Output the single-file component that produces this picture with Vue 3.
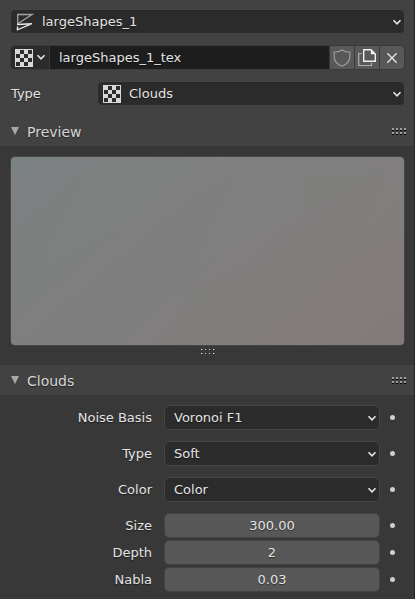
<script setup>
import { ref } from 'vue'

const material = ref('largeShapes_1')
const textureName = ref('largeShapes_1_tex')
const textureType = ref('Clouds')
const previewOpen = ref(true)
const cloudsOpen = ref(true)

const choices = ref([
  { id: 'noise-basis', label: 'Noise Basis', value: 'Voronoi F1', options: ['Blender Original', 'Original Perlin', 'Improved Perlin', 'Voronoi F1', 'Voronoi F2'] },
  { id: 'noise-type', label: 'Type', value: 'Soft', options: ['Soft', 'Hard'] },
  { id: 'noise-color', label: 'Color', value: 'Color', options: ['Grayscale', 'Color'] },
])

const numbers = ref([
  { id: 'size', label: 'Size', value: '300.00' },
  { id: 'depth', label: 'Depth', value: '2' },
  { id: 'nabla', label: 'Nabla', value: '0.03' },
])
</script>

<template>
  <main class="editor">
    <svg class="defs" aria-hidden="true">
      <symbol id="checker" viewBox="0 0 18 18">
        <rect width="18" height="18" fill="#d8d8d8" />
        <path
          fill="#2b2b2b"
          d="M5 1h4v4h-4zM13 1h4v4h-4zM1 5h4v4h-4zM9 5h4v4h-4zM5 9h4v4h-4zM13 9h4v4h-4zM1 13h4v4h-4zM9 13h4v4h-4z"
        />
      </symbol>
      <symbol id="chevron" viewBox="0 0 10 7">
        <path d="M1.5 1.3 5 4.8 8.5 1.3" fill="none" stroke="#e6e6e6" stroke-width="1.6" />
      </symbol>
    </svg>

    <section class="context">
      <div class="drop">
        <select v-model="material" class="with-icon" aria-label="Texture user">
          <option>largeShapes_1</option>
        </select>
        <svg class="lead" width="18" height="18" viewBox="0 0 18 18" fill="none" aria-hidden="true">
          <path d="M1.7 11V1.5H16L1.7 10.8" stroke="#a2a2a2" stroke-width="1.3" />
          <path d="M1 11.5 16 10.7 1.5 16.8V13.5" stroke="#e8e8e8" stroke-width="1.4" />
        </svg>
        <svg class="arrow" width="10" height="7" aria-hidden="true"><use href="#chevron" /></svg>
      </div>

      <div class="datablock">
        <button type="button" class="browse" aria-label="Browse textures">
          <svg width="18" height="18" aria-hidden="true"><use href="#checker" /></svg>
          <svg width="10" height="7" aria-hidden="true"><use href="#chevron" /></svg>
        </button>
        <input v-model="textureName" type="text" aria-label="Texture name" />
        <button type="button" class="action" aria-label="Fake user">
          <svg width="18" height="18" viewBox="0 0 18 18" fill="none" aria-hidden="true">
            <path d="M9 .9C7 2.4 4.5 3 1.2 3V7.5C1.2 12 4 15.2 9 17.2C14 15.2 16.8 12 16.8 7.5V3C13.5 3 11 2.4 9 .9Z" stroke="#9c9c9c" stroke-width="1.2" />
          </svg>
        </button>
        <button type="button" class="action" aria-label="New texture">
          <svg width="18" height="18" viewBox="0 0 18 18" fill="none" aria-hidden="true">
            <path d="M4 4.5H.7V16.5H13.5V14" stroke="#b0b0b0" stroke-width="1.2" />
            <path d="M5.7 .7H13L17.3 5V12.3H5.7Z" stroke="#f0f0f0" stroke-width="1.4" />
            <path d="M12.8 .5V5.2H17.5Z" fill="#f0f0f0" />
          </svg>
        </button>
        <button type="button" class="action" aria-label="Unlink texture">
          <svg width="18" height="18" viewBox="0 0 18 18" fill="none" aria-hidden="true">
            <path d="M4.3 4.3 13.7 13.7M13.7 4.3 4.3 13.7" stroke="#e6e6e6" stroke-width="1.3" />
          </svg>
        </button>
      </div>

      <div class="type-row">
        <label for="texture-type">Type</label>
        <div class="drop">
          <select id="texture-type" v-model="textureType" class="with-icon">
            <option>Clouds</option>
            <option>Wood</option>
            <option>Voronoi</option>
          </select>
          <svg class="lead" width="18" height="18" aria-hidden="true"><use href="#checker" /></svg>
          <svg class="arrow" width="10" height="7" aria-hidden="true"><use href="#chevron" /></svg>
        </div>
      </div>
    </section>

    <section>
      <h2 class="bar">
        <button type="button" :aria-expanded="previewOpen" @click="previewOpen = !previewOpen">
          <svg width="8" height="8" viewBox="0 0 8 8" aria-hidden="true"><path d="M0 0H8L4 8Z" fill="#a8a8a8" /></svg>
          Preview
        </button>
        <svg class="grip" width="14" height="7" viewBox="0 0 14 7" aria-hidden="true">
          <path fill="#000" d="M0 2h2v1h-2zM4 2h2v1h-2zM8 2h2v1h-2zM12 2h2v1h-2zM0 6h2v1h-2zM4 6h2v1h-2zM8 6h2v1h-2zM12 6h2v1h-2z" />
          <path fill="#a0a0a0" d="M0 0h2v2h-2zM4 0h2v2h-2zM8 0h2v2h-2zM12 0h2v2h-2zM0 4h2v2h-2zM4 4h2v2h-2zM8 4h2v2h-2zM12 4h2v2h-2z" />
        </svg>
      </h2>
      <div v-if="previewOpen" class="preview">
        <svg class="swatch" viewBox="0 0 393 188" preserveAspectRatio="none" role="img" aria-label="Texture preview">
          <defs>
            <linearGradient id="tint" gradientUnits="userSpaceOnUse" x1="30" y1="-60" x2="300" y2="260">
              <stop offset="0" stop-color="#7a8184" />
              <stop offset=".25" stop-color="#7d807f" />
              <stop offset=".45" stop-color="#7f7f7f" />
              <stop offset=".65" stop-color="#817e7e" />
              <stop offset="1" stop-color="#837b79" />
            </linearGradient>
          </defs>
          <rect width="393" height="188" fill="url(#tint)" />
          <path d="M0 48 80 10 30 109 150 50 229 12 182 108 290 56 377 12 344 90 393 78V0H0Z" fill="#fff" fill-opacity=".008" />
          <path d="M150 188 182 130 250 110 240 150 180 188Z" fill="#7a8070" fill-opacity=".1" />
          <path d="M290 56 377 12 290 20Z" fill="#7a8070" fill-opacity=".1" />
        </svg>
        <svg class="resize" width="14" height="5" viewBox="0 0 14 5" aria-hidden="true">
          <path fill="#d4d4d4" d="M0 0h1v1h-1zM4 0h1v1h-1zM8 0h1v1h-1zM12 0h1v1h-1zM0 4h1v1h-1zM4 4h1v1h-1zM8 4h1v1h-1zM12 4h1v1h-1z" />
          <path fill="#808080" d="M1 0h1v1h-1zM13 0h1v1h-1zM1 4h1v1h-1zM13 4h1v1h-1z" />
        </svg>
      </div>
    </section>

    <section>
      <h2 class="bar">
        <button type="button" :aria-expanded="cloudsOpen" @click="cloudsOpen = !cloudsOpen">
          <svg width="8" height="8" viewBox="0 0 8 8" aria-hidden="true"><path d="M0 0H8L4 8Z" fill="#a8a8a8" /></svg>
          Clouds
        </button>
        <svg class="grip" width="14" height="7" viewBox="0 0 14 7" aria-hidden="true">
          <path fill="#000" d="M0 2h2v1h-2zM4 2h2v1h-2zM8 2h2v1h-2zM12 2h2v1h-2zM0 6h2v1h-2zM4 6h2v1h-2zM8 6h2v1h-2zM12 6h2v1h-2z" />
          <path fill="#a0a0a0" d="M0 0h2v2h-2zM4 0h2v2h-2zM8 0h2v2h-2zM12 0h2v2h-2zM0 4h2v2h-2zM4 4h2v2h-2zM8 4h2v2h-2zM12 4h2v2h-2z" />
        </svg>
      </h2>
      <div v-if="cloudsOpen" class="props">
        <div v-for="c in choices" :key="c.id" class="prop">
          <label :for="c.id">{{ c.label }}</label>
          <div class="drop">
            <select :id="c.id" v-model="c.value">
              <option v-for="o in c.options" :key="o">{{ o }}</option>
            </select>
            <svg class="arrow" width="10" height="7" aria-hidden="true"><use href="#chevron" /></svg>
          </div>
          <span class="dot"></span>
        </div>
        <div class="numbers">
          <div v-for="n in numbers" :key="n.id" class="prop">
            <label :for="n.id">{{ n.label }}</label>
            <input :id="n.id" v-model="n.value" type="text" inputmode="decimal" class="number" />
            <span class="dot"></span>
          </div>
        </div>
      </div>
    </section>
  </main>
</template>

<style>
body {
  background: #383838;
}
</style>

<style scoped>
.editor {
  min-height: 100vh;
  box-sizing: border-box;
  border-right: 1px solid #262626;
  background: #383838;
  color: #e4e4e4;
  font-family: "DejaVu Sans", sans-serif;
  font-size: 13px;
  line-height: 16px;
  text-shadow: 0 1px 1px rgba(0, 0, 0, 0.5);
}

.defs {
  display: none;
}

.editor button,
.editor input,
.editor select {
  box-sizing: border-box;
  min-width: 0;
  margin: 0;
  padding: 0;
  border: 0;
  border-radius: 0;
  color: inherit;
  font: inherit;
  text-shadow: inherit;
}

.context {
  display: flex;
  flex-direction: column;
  gap: 11px;
  padding: 9px 9px 10px 10px;
  background: #424242;
}

.drop {
  display: grid;
  align-items: center;
}

.drop > * {
  grid-area: 1 / 1;
}

.drop svg {
  pointer-events: none;
}

.editor .drop select {
  appearance: none;
  width: 100%;
  height: 25px;
  padding: 0 24px 0 9px;
  border: 1px solid #454545;
  border-radius: 5px;
  background: #2b2b2b;
}

.editor .drop .with-icon {
  padding-left: 31px;
}

.lead {
  margin-left: 6px;
}

.arrow {
  justify-self: end;
  margin: 2px 3px 0 0;
}

.datablock {
  display: grid;
  grid-template-columns: 38px 1fr 24px 24px 24px;
  gap: 1px;
  height: 25px;
  box-sizing: border-box;
  border: 1px solid #3a3a3a;
  border-radius: 5px;
  background: #3a3a3a;
  overflow: hidden;
}

.editor .datablock button {
  display: flex;
  align-items: center;
  justify-content: center;
  background: #585858;
}

.editor .datablock .browse {
  gap: 3px;
  background: #2b2b2b;
}

.editor .datablock input {
  padding-left: 9px;
  background: #1d1d1d;
}

.type-row {
  display: grid;
  grid-template-columns: 87fr 308fr;
  align-items: center;
}

.type-row label {
  padding-left: 1px;
}

.bar {
  display: flex;
  align-items: center;
  height: 30px;
  margin: 0;
  padding: 0 8px 0 11px;
  background: #424242;
  color: #d6d6d6;
  font-size: 14px;
  font-weight: normal;
}

.editor .bar button {
  display: flex;
  flex: 1;
  align-items: center;
  gap: 8px;
  padding-top: 2px;
  background: none;
}

.bar button svg {
  margin-bottom: 2px;
}

.preview {
  display: flex;
  flex-direction: column;
  align-items: center;
  gap: 3px;
  padding: 10px 9px 11px 10px;
}

.swatch {
  width: 100%;
  height: 190px;
  box-sizing: border-box;
  border: 1px solid #474747;
  border-radius: 5px;
}

.props {
  display: flex;
  flex-direction: column;
  gap: 11px;
  padding: 10px 9px 7px 10px;
}

.prop {
  display: grid;
  grid-template-columns: 154fr 216fr 25px;
  align-items: center;
}

.prop label {
  padding-right: 12px;
  text-align: right;
}

.numbers {
  display: flex;
  flex-direction: column;
  gap: 2px;
}

.editor .number {
  width: 100%;
  height: 25px;
  border: 1px solid #424242;
  border-radius: 5px;
  background: #575757;
  text-align: center;
}

.dot {
  justify-self: center;
  width: 5px;
  height: 5px;
  border-radius: 50%;
  background: #cfcfcf;
}
</style>
